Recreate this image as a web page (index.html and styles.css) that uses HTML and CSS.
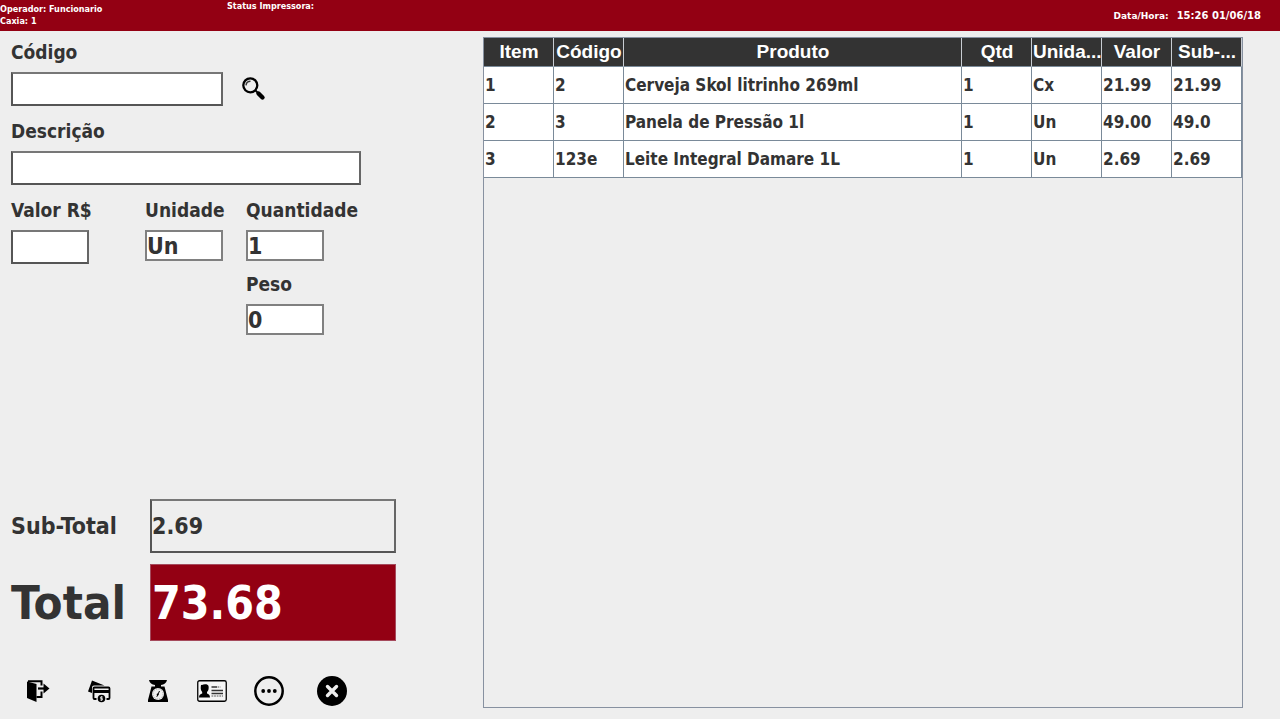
FILE: index.html
```html
<!DOCTYPE html>
<html lang="pt-BR">
<head>
<meta charset="utf-8">
<title>Caixa</title>
<link rel="stylesheet" href="styles.css">
</head>
<body class="app">
<header class="topbar">
  <div class="operator">Operador: Funcionario<br>Caxia: 1</div>
  <div class="printer">Status Impressora:</div>
  <div class="clock"><span>Data/Hora:</span><span class="time">15:26 01/06/18</span></div>
</header>
<main class="main">
  <section class="panel">
    <form class="form">
      <div class="field">
        <label class="label" for="codigo">Código</label>
        <div class="search">
          <input class="input code" id="codigo" type="text">
          <button class="icon-button" type="button" aria-label="Buscar">
            <svg width="24" height="24" viewBox="0 0 24 24"><circle cx="8.300" cy="8.300" r="7" fill="none" stroke="#000" stroke-width="2.300"/><path d="M4 8.300a4.500 4.500 0 0 1 4.500-4" fill="none" stroke="#333" stroke-width="1.400"/><path d="M13 13l3 3" stroke="#000" stroke-width="1.800"/><path d="M16.500 16.500l4 4" stroke="#000" stroke-width="4.400" stroke-linecap="round"/></svg>
          </button>
        </div>
      </div>
      <div class="field">
        <label class="label" for="descricao">Descrição</label>
        <input class="input description" id="descricao" type="text">
      </div>
      <div class="amounts">
        <div class="field">
          <label class="label" for="valor">Valor R$</label>
          <input class="input small" id="valor" type="text">
        </div>
        <div class="field">
          <label class="label" for="unidade">Unidade</label>
          <input class="input small low" id="unidade" type="text" value="Un">
        </div>
        <div class="stack">
          <div class="field">
            <label class="label" for="quantidade">Quantidade</label>
            <input class="input small low" id="quantidade" type="text" value="1">
          </div>
          <div class="field">
            <label class="label" for="peso">Peso</label>
            <input class="input small low" id="peso" type="text" value="0">
          </div>
        </div>
      </div>
    </form>
    <div class="totals">
      <label class="subtotal-label" for="subtotal">Sub-Total</label>
      <input class="input subtotal" id="subtotal" type="text" value="2.69" readonly>
      <label class="total-label" for="total">Total</label>
      <input class="total" id="total" type="text" value="73.68" readonly>
    </div>
    <nav class="actions">
      <button class="icon-button" type="button" aria-label="Sair">
        <svg width="24" height="24" viewBox="0 0 24 24"><path d="M1 2.500L10.500 5v18L1 19z"/><path d="M2 2.200h13.500v4.300M15.500 12.500v5.500h-5" fill="none" stroke="#000" stroke-width="2"/><path d="M12 9.500h7" stroke="#000" stroke-width="2.200"/><path d="M17.500 4.500L23.500 9.500l-6 5z"/></svg>
      </button>
      <button class="icon-button" type="button" aria-label="Pagamento">
        <svg width="24" height="24" viewBox="0 0 24 24"><path d="M5 1.500L17.500 6.500H7a2 2 0 0 0-2 2V14L1 12.500z"/><path d="M9.500 20H7.500a1 1 0 0 1-1-1V9.500a1 1 0 0 1 1-1h14a1 1 0 0 1 1 1V19a1 1 0 0 1-1 1h-2" fill="none" stroke="#000" stroke-width="1.800"/><path d="M7 11h15v3H7z"/><circle cx="14.500" cy="19.500" r="3.800"/><path d="M16 18h-2.500v1.500h2V21H13M14.500 17v5" fill="none" stroke="#eee" stroke-width=".7"/></svg>
      </button>
      <button class="icon-button" type="button" aria-label="Balança">
        <svg width="24" height="24" viewBox="0 0 24 24"><path d="M3 1h18c-.5 3-3 4.500-6 5v1.500h3.500L22 21v2H2v-2L5.500 7.500H9V6C6 5.500 3.500 4 3 1z"/><circle cx="12" cy="15" r="6" fill="#eee"/><circle cx="12" cy="15" r="5" fill="none" stroke="#777" stroke-width=".7" stroke-dasharray=".7 1.200"/><path d="M10.800 17.800L13.500 12" stroke="#000"/><circle cx="11.700" cy="15.500" r="1"/></svg>
      </button>
      <button class="icon-button" type="button" aria-label="Cliente">
        <svg width="30" height="22" viewBox="0 0 30 22"><rect x=".75" y=".75" width="28.500" height="20.500" rx="1.800" fill="#f5f5f5" stroke="#000" stroke-width="1.300"/><path d="M4 5l2-.3C7 4 11 3.500 11.500 6c.4 2 .2 4.500-1.500 6v1.500c1.500.7 3 1.300 3 4H2c0-2.700 1.500-3.300 3.200-4V12C3.500 10 3.500 8 4 5z"/><path d="M14.500 7h5.500M14.500 10.500H26M14.500 13.500H26" stroke="#333" stroke-width="1.300"/><path d="M20.500 7h3M14.500 16H26" stroke="#555" stroke-dasharray="1.800 .8"/></svg>
      </button>
      <button class="icon-button" type="button" aria-label="Mais opções">
        <svg width="30" height="30" viewBox="0 0 30 30"><circle cx="15" cy="15" r="13.700" fill="none" stroke="#000" stroke-width="2.500"/><circle cx="9.200" cy="15" r="1.900"/><circle cx="15" cy="15" r="1.900"/><circle cx="20.800" cy="15" r="1.900"/></svg>
      </button>
      <button class="icon-button" type="button" aria-label="Cancelar">
        <svg width="30" height="30" viewBox="0 0 30 30"><circle cx="15" cy="15" r="15"/><path d="M10.500 10.500l9 9m0-9l-9 9" stroke="#eee" stroke-width="3.400" stroke-linecap="round"/></svg>
      </button>
    </nav>
  </section>
  <section class="items">
    <table class="table">
      <colgroup><col class="col"><col class="col"><col><col class="col"><col class="col"><col class="col"><col class="col"></colgroup>
      <thead><tr><th>Item</th><th>Código</th><th>Produto</th><th>Qtd</th><th>Unida...</th><th>Valor</th><th>Sub-...</th></tr></thead>
      <tbody>
        <tr><td>1</td><td>2</td><td>Cerveja Skol litrinho 269ml</td><td>1</td><td>Cx</td><td>21.99</td><td>21.99</td></tr>
        <tr><td>2</td><td>3</td><td>Panela de Pressão 1l</td><td>1</td><td>Un</td><td>49.00</td><td>49.0</td></tr>
        <tr><td>3</td><td>123e</td><td>Leite Integral Damare 1L</td><td>1</td><td>Un</td><td>2.69</td><td>2.69</td></tr>
      </tbody>
    </table>
  </section>
</main>
</body>
</html>
```
FILE: styles.css
```css
* { box-sizing: border-box; }

.app {
  margin: 0;
  min-height: 100vh;
  display: flex;
  flex-direction: column;
  background: #eee;
  color: #333;
  font-family: "DejaVu Sans Condensed", "DejaVu Sans", sans-serif;
  font-weight: bold;
}

.topbar {
  display: grid;
  grid-template-columns: 227px 1fr auto;
  min-height: 31px;
  padding-right: 19px;
  background: #930013;
  color: #fff;
  font-size: 9px;
  line-height: 12px;
}
.operator { padding-top: 3px; }
.clock {
  display: flex;
  gap: 8px;
  padding-top: 10px;
  font-family: "DejaVu Sans", sans-serif;
}
.time { font-size: 10px; }

.main { flex: 1; display: flex; }

.panel {
  flex: 0 0 483px;
  display: flex;
  flex-direction: column;
  padding: 9px 11px 13px;
}
.form { display: flex; flex-direction: column; gap: 13px; }
.field { display: flex; flex-direction: column; align-items: flex-start; gap: 8px; }
.label { font-size: 19px; line-height: 24px; }
.search { display: flex; align-items: center; gap: 19px; }

.input {
  height: 34px;
  margin: 0;
  padding: 0;
  border: 2px solid;
  border-color: #777 #666 #555 #555;
  border-radius: 0;
  background: #fff;
  color: #333;
  font: inherit;
  font-size: 23px;
}
.code { width: 212px; }
.description { width: 350px; }
.small { width: 78px; }
.low { height: 31px; border-color: #808080; }
.amounts { display: grid; grid-template-columns: 134px 101px auto; justify-content: start; }
.stack { display: flex; flex-direction: column; gap: 11px; }

.totals {
  display: grid;
  grid-template-columns: 139px 246px;
  row-gap: 11px;
  align-items: center;
  margin-top: auto;
}
.subtotal-label { font-size: 23px; }
.subtotal { height: 54px; background: #eee; }
.total-label { font-size: 47px; line-height: 54px; }
.total {
  height: 77px;
  margin: 0;
  padding: 0 1px;
  border: 1px solid #a54a5c;
  background: #930013;
  color: #fff;
  font: inherit;
  font-size: 46px;
}

.actions {
  display: grid;
  grid-template-columns: 61px 59px 51px 57px 63px 30px;
  align-items: center;
  margin-top: 35px;
  padding-left: 15px;
}
.icon-button {
  display: flex;
  padding: 0;
  border: 0;
  background: none;
  cursor: pointer;
}

.items {
  flex: 1;
  margin: 6px 37px 11px 0;
  border: 1px solid #8791a0;
}
.table {
  width: 100%;
  table-layout: fixed;
  border-collapse: separate;
  border-spacing: 0;
}
.col { width: 70px; }
.table th {
  height: 29px;
  padding: 0 0 0 1px;
  border-right: 1px solid #c8ccd2;
  border-bottom: 1px solid #7a8a99;
  background: #333;
  color: #fff;
  font-family: "Liberation Sans", Arial, sans-serif;
  font-size: 19px;
  line-height: 28px;
  white-space: nowrap;
}
.table td {
  height: 37px;
  padding: 0 1px;
  border-right: 1px solid #7a8a99;
  border-bottom: 1px solid #7a8a99;
  background: #fff;
  font-size: 17px;
}
```
